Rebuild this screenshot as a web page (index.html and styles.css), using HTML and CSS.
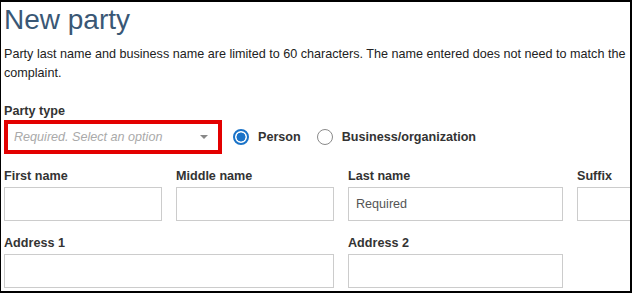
FILE: index.html
```html
<!DOCTYPE html>
<html lang="en">
<head>
    <meta charset="UTF-8">
    <meta name="viewport" content="width=device-width, initial-scale=1.0">
    <title>New party</title>
    <link rel="stylesheet" href="styles.css">
</head>
<body>
    <div class="frame">
        <h1 class="title">New party</h1>
        <p class="intro">Party last name and business name are limited to 60 characters. The name entered does not need to match the complaint.</p>

        <div class="party-type">
            <div class="field-label">Party type</div>
            <div class="type-row">
                <div class="select-box">
                    <span class="placeholder">Required. Select an option</span>
                    <span class="caret"></span>
                </div>
                <label class="radio checked"><span class="radio-dot"></span>Person</label>
                <label class="radio"><span class="radio-dot"></span>Business/organization</label>
            </div>
        </div>

        <div class="fields">
            <div class="field">
                <div class="field-label">First name</div>
                <input class="text-input" type="text">
            </div>
            <div class="field">
                <div class="field-label">Middle name</div>
                <input class="text-input" type="text">
            </div>
            <div class="field">
                <div class="field-label">Last name</div>
                <input class="text-input" type="text" placeholder="Required">
            </div>
            <div class="field">
                <div class="field-label">Suffix</div>
                <input class="text-input" type="text">
            </div>
            <div class="field wide">
                <div class="field-label">Address 1</div>
                <input class="text-input" type="text">
            </div>
            <div class="field">
                <div class="field-label">Address 2</div>
                <input class="text-input" type="text">
            </div>
        </div>
    </div>
</body>
</html>
```

FILE: styles.css
```css
html, body {
    margin: 0;
    background-color: #fff;
}

body {
    font-family: "Liberation Sans", Arial, sans-serif;
    font-size: 12.6px;
    color: #222;
}

.frame {
    box-sizing: border-box;
    width: 632px;
    height: 293px;
    border: 2px solid #000;
    border-left-width: 1px;
    padding-left: 3px;
    overflow: hidden;
}

.title {
    margin: 2px 0 0;
    font-size: 28px;
    font-weight: normal;
    line-height: 31px;
    color: #395775;
}

.intro {
    margin: 10px 0 0;
    line-height: 18.9px;
}

.party-type {
    margin-top: 20px;
}

.field-label {
    font-weight: bold;
    line-height: 17px;
    color: #333;
    margin-bottom: 2px;
}

.party-type .field-label {
    margin-bottom: 0;
}

.type-row {
    display: flex;
    align-items: center;
}

.select-box {
    box-sizing: border-box;
    width: 218px;
    height: 34px;
    border: 4px solid #e30000;
    display: flex;
    align-items: center;
    justify-content: space-between;
    padding: 0 10px 0 6px;
}

.placeholder {
    font-style: italic;
    color: #aaa;
}

.caret {
    width: 0;
    height: 0;
    border-left: 4px solid transparent;
    border-right: 4px solid transparent;
    border-top: 4px solid #888;
}

.radio {
    display: flex;
    align-items: center;
    font-weight: bold;
    color: #333;
    margin-left: 16px;
}

.radio:first-of-type {
    margin-left: 11px;
}

.radio-dot {
    box-sizing: border-box;
    width: 16px;
    height: 16px;
    border: 1px solid #8a8a8a;
    border-radius: 50%;
    margin-right: 9px;
}

.checked .radio-dot {
    border: 2px solid #1a73c8;
    background: radial-gradient(circle, #1a73c8 4.2px, #fff 4.8px);
}

.fields {
    display: grid;
    grid-template-columns: 158px 158px 215px 158px;
    column-gap: 14px;
    row-gap: 14px;
    margin-top: 14px;
}

.wide {
    grid-column: span 2;
}

.text-input {
    display: block;
    box-sizing: border-box;
    width: 100%;
    height: 34px;
    margin: 0;
    border: 1px solid #ccc;
    border-radius: 0;
    padding: 0 7px;
    font-family: inherit;
    font-size: 12.6px;
    color: #333;
    outline: none;
}

.text-input::placeholder {
    color: #555;
}
```
